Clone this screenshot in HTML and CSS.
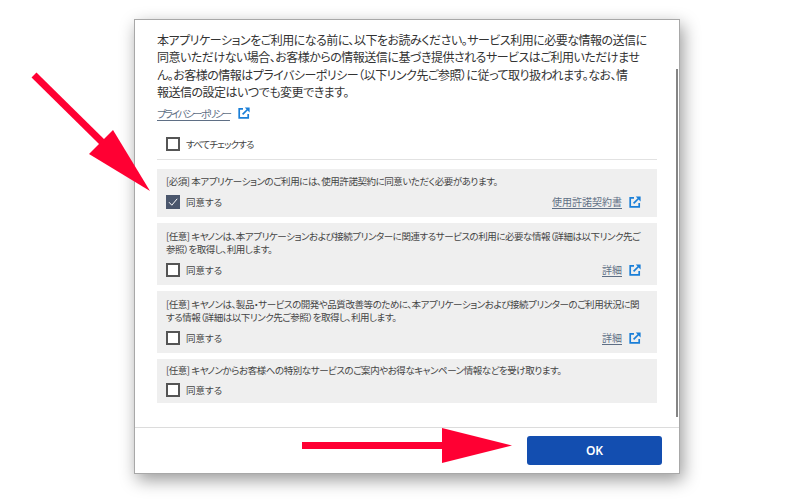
FILE: index.html

```html
<!DOCTYPE html>
<html lang="ja">
<head>
  <meta charset="UTF-8" />
  <title>同意</title>
  <link rel="stylesheet" href="styles.css">
</head>
<body>
  <svg width="0" height="0" class="defs">
    <symbol id="ext" viewBox="0 0 12 12">
      <path d="M5 1.8H1.2v9h9V7" fill="none" stroke="#1a7fd8" stroke-width="1.7"/>
      <path d="M4.6 7.4 10 2" fill="none" stroke="#1a7fd8" stroke-width="1.7"/>
      <path d="M6.8.6h4.8v4.8z" fill="#1a7fd8"/>
    </symbol>
  </svg>

  <div class="dialog">
    <div class="content">
      <p class="intro">本アプリケーションをご利用になる前に、以下をお読みください。サービス利用に必要な情報の送信に<br>同意いただけない場合、お客様からの情報送信に基づき提供されるサービスはご利用いただけませ<br>ん。お客様の情報はプライバシーポリシー（以下リンク先ご参照）に従って取り扱われます。なお、情<br>報送信の設定はいつでも変更できます。</p>
      <div class="policy">
        <a class="link link-kana">プライバシーポリシー</a>
        <svg class="ext"><use href="#ext"/></svg>
      </div>
      <div class="check-all">
        <span class="box"></span>
        <span class="label label-kana">すべてチェックする</span>
      </div>

      <div class="card card-short">
        <div class="card-text">[必須] 本アプリケーションのご利用には、使用許諾契約に同意いただく必要があります。</div>
        <div class="card-row">
          <span class="box checked">
            <svg width="14" height="14" viewBox="0 0 14 14"><path d="M3 7.2 5.8 10.2 11.2 3.8" fill="none" stroke="#fff" stroke-width="1"/></svg>
          </span>
          <span class="label">同意する</span>
          <a class="link">使用許諾契約書</a>
          <svg class="ext"><use href="#ext"/></svg>
        </div>
      </div>

      <div class="card">
        <div class="card-text">[任意] キヤノンは、本アプリケーションおよび接続プリンターに関連するサービスの利用に必要な情報（詳細は以下リンク先ご<br>参照）を取得し、利用します。</div>
        <div class="card-row">
          <span class="box"></span>
          <span class="label">同意する</span>
          <a class="link">詳細</a>
          <svg class="ext"><use href="#ext"/></svg>
        </div>
      </div>

      <div class="card">
        <div class="card-text">[任意] キヤノンは、製品・サービスの開発や品質改善等のために、本アプリケーションおよび接続プリンターのご利用状況に関<br>する情報（詳細は以下リンク先ご参照）を取得し、利用します。</div>
        <div class="card-row">
          <span class="box"></span>
          <span class="label">同意する</span>
          <a class="link">詳細</a>
          <svg class="ext"><use href="#ext"/></svg>
        </div>
      </div>

      <div class="card card-last">
        <div class="card-text">[任意] キヤノンからお客様への特別なサービスのご案内やお得なキャンペーン情報などを受け取ります。</div>
        <div class="card-row">
          <span class="box"></span>
          <span class="label">同意する</span>
        </div>
      </div>
      <div class="scrollbar"></div>
    </div>
    <div class="footer">
      <button class="ok">OK</button>
    </div>
  </div>

  <!-- red arrows drawn over the screenshot -->
  <svg class="arrows" width="800" height="500" viewBox="0 0 800 500">
    <path d="M34 75 102 142" stroke="#ff0033" stroke-width="7" fill="none"/>
    <path d="M150 191 89 154 113 130z" fill="#ff0033"/>
    <path d="M302 445.5H450" stroke="#ff0033" stroke-width="7" fill="none"/>
    <path d="M512 445.5 442 428V463z" fill="#ff0033"/>
  </svg>
</body>
</html>
```

FILE: styles.css

```css
body {
  margin: 0;
  width: 800px;
  height: 500px;
  background: #fff;
  overflow: hidden;
  font-family: "Noto Sans CJK JP", "Noto Sans", sans-serif;
  font-feature-settings: "palt";
  color: #333;
  display: flex;
  flex-direction: column;
  align-items: flex-start;
}

.defs {
  position: absolute;
}

.dialog {
  position: relative;
  margin: 19px 0 0 134px;
  width: 546px;
  height: 455px;
  box-sizing: border-box;
  background: #fff;
  border: 1px solid #a8a8a8;
  box-shadow: 3px 6px 16px rgba(0, 0, 0, 0.4);
  display: flex;
  flex-direction: column;
}

.content {
  flex: 1;
  min-height: 0;
  padding: 11px 22px 0;
}

.intro {
  margin: 0;
  font-size: 12px;
  line-height: 17.3px;
  letter-spacing: -0.5px;
  white-space: nowrap;
}

.policy {
  display: flex;
  align-items: center;
  gap: 8px;
  margin-top: 4px;
  height: 18px;
}

.link {
  font-size: 10px;
  color: #5f6f85;
  text-decoration: underline;
  text-underline-offset: 2px;
}

.link-kana {
  letter-spacing: -1.9px;
}

.ext {
  width: 12px;
  height: 12px;
  flex: none;
}

.check-all {
  display: flex;
  align-items: center;
  gap: 6px;
  height: 30px;
  padding: 7px 0 0 9px;
  border-bottom: 1px solid #e2e2e2;
  margin-bottom: 9px;
}

.box {
  width: 14px;
  height: 14px;
  box-sizing: border-box;
  border: 2px solid #555;
  background: #fff;
  flex: none;
}

.box.checked {
  border: none;
  background: #4a566c;
}

.box.checked svg {
  display: block;
}

.label {
  font-size: 9.5px;
  color: #444;
}

.label-kana {
  letter-spacing: -0.9px;
}

.card {
  background: #efefef;
  height: 62px;
  box-sizing: border-box;
  margin-bottom: 6px;
  padding: 7px 16px 8px 9px;
  display: flex;
  flex-direction: column;
  justify-content: space-between;
}

.card-short {
  height: 48px;
  padding-top: 6px;
}

.card-last {
  height: 44px;
  padding-top: 5px;
  padding-bottom: 6px;
}

.card-text {
  font-size: 9.5px;
  line-height: 12.5px;
  letter-spacing: -0.45px;
  color: #444;
  white-space: nowrap;
}

.card-row {
  display: flex;
  align-items: center;
  gap: 6px;
}

.card-row .link {
  margin-left: auto;
  margin-right: 1px;
}

.scrollbar {
  position: absolute;
  right: 1px;
  top: 49px;
  width: 2px;
  height: 348px;
  background: #858585;
}

.footer {
  height: 46px;
  flex: none;
  box-sizing: border-box;
  border-top: 1px solid #dcdcdc;
  display: flex;
  justify-content: flex-end;
  align-items: flex-start;
  padding: 8px 17px 0 0;
}

.ok {
  width: 135px;
  height: 29px;
  border: none;
  border-radius: 3px;
  background: #134eb0;
  color: #fff;
  font-family: "Noto Sans", sans-serif;
  font-size: 12px;
  font-weight: 600;
}

.arrows {
  position: absolute;
  left: 0;
  top: 0;
}
```
